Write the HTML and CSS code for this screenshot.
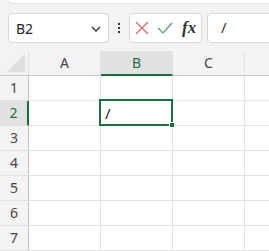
FILE: index.html
```html
<!DOCTYPE html>
<html lang="en">
<head>
  <meta charset="UTF-8" />
  <title>Sheet</title>
  <link rel="stylesheet" href="styles.css">
</head>
<body>

  <div class="ribbon"></div>

  <div class="formula-bar">
    <div class="name-box">
      <span>B2</span>
      <svg class="chevron" width="10" height="6" viewBox="0 0 10 6">
        <path d="M1 1 L5 5 L9 1" fill="none" stroke="#333" stroke-width="1.4"/>
      </svg>
    </div>
    <div class="kebab"><i></i><i></i><i></i></div>
    <div class="fx-group">
      <svg width="14" height="14" viewBox="0 0 14 14">
        <path d="M1 1 L13 13 M13 1 L1 13" stroke="#d9646f" stroke-width="1.2"/>
      </svg>
      <svg width="16" height="12" viewBox="0 0 16 12">
        <path d="M1 6 L6 11 L15 1" fill="none" stroke="#4d9c6b" stroke-width="1.2"/>
      </svg>
      <span class="fx">fx</span>
    </div>
    <div class="formula-input">/</div>
  </div>

  <div class="sheet">
    <div class="corner"><span class="tri"></span></div>
    <div class="col-head">A</div>
    <div class="col-head active">B</div>
    <div class="col-head">C</div>
    <div class="col-head last"></div>

    <div class="row-head">1</div>
    <div class="cell"></div><div class="cell"></div><div class="cell"></div><div class="cell last"></div>

    <div class="row-head active">2</div>
    <div class="cell"></div><div class="cell selected">/</div><div class="cell"></div><div class="cell last"></div>

    <div class="row-head">3</div>
    <div class="cell"></div><div class="cell"></div><div class="cell"></div><div class="cell last"></div>

    <div class="row-head">4</div>
    <div class="cell"></div><div class="cell"></div><div class="cell"></div><div class="cell last"></div>

    <div class="row-head">5</div>
    <div class="cell"></div><div class="cell"></div><div class="cell"></div><div class="cell last"></div>

    <div class="row-head">6</div>
    <div class="cell"></div><div class="cell"></div><div class="cell"></div><div class="cell last"></div>

    <div class="row-head">7</div>
    <div class="cell"></div><div class="cell"></div><div class="cell"></div><div class="cell last"></div>
  </div>

</body>
</html>
```

FILE: styles.css
```css
body {
  margin: 0;
  background: #f3f3f3;
  font-family: "Noto Sans", "Open Sans", sans-serif;
  color: #333;
  overflow: hidden;
}

.ribbon {
  height: 3px;
  margin-left: 8px;
  background: #fff;
  border: 1px solid #e3e3e3;
  border-top: none;
  border-right: none;
  border-bottom-left-radius: 6px;
}

.formula-bar {
  display: flex;
  align-items: center;
  height: 30px;
  margin-top: 9px;
  padding-left: 8px;
}

.name-box {
  box-sizing: border-box;
  width: 101px;
  height: 30px;
  background: #fff;
  border: 1px solid #d6d6d6;
  border-radius: 4px;
  display: flex;
  align-items: center;
  justify-content: space-between;
  padding: 0 7px 0 7px;
  font-size: 14px;
  color: #222;
}

.chevron {
  margin-top: 1px;
}

.kebab {
  display: flex;
  flex-direction: column;
  gap: 2px;
  margin: 0 9px 0 9px;
}

.kebab i {
  display: block;
  width: 2px;
  height: 2px;
  background: #333;
}

.fx-group {
  box-sizing: border-box;
  width: 73px;
  height: 30px;
  background: #fff;
  border: 1px solid #d6d6d6;
  border-radius: 4px;
  display: flex;
  align-items: center;
  gap: 8px;
  padding-left: 5px;
}

.fx {
  font-family: "Liberation Serif", serif;
  font-style: italic;
  font-weight: bold;
  font-size: 17px;
  color: #333;
  margin-left: 1px;
}

.formula-input {
  box-sizing: border-box;
  flex: 1;
  height: 30px;
  margin-left: 5px;
  margin-right: -10px;
  background: #fff;
  border: 1px solid #d6d6d6;
  border-radius: 4px;
  padding-left: 13px;
  font-size: 15px;
  line-height: 27px;
  color: #333;
}

.sheet {
  display: grid;
  grid-template-columns: 29px 72px 72px 72px 1fr;
  grid-auto-rows: 25px;
  margin-top: 8px;
  background: #fff;
}

.sheet > div {
  box-sizing: border-box;
  border-right: 1px solid #e1e1e1;
  border-bottom: 1px solid #e1e1e1;
}

.sheet > .last {
  border-right: none;
}

.corner {
  background: #f3f3f3;
  position: relative;
}

.sheet > .corner,
.sheet > .col-head {
  border-bottom-color: #c8c8c8;
}

.tri {
  position: absolute;
  right: 3px;
  bottom: 3px;
  width: 0;
  height: 0;
  border-left: 18px solid transparent;
  border-bottom: 18px solid #dedede;
}

.col-head {
  background: #f3f3f3;
  text-align: center;
  font-size: 14px;
  line-height: 24px;
  color: #444;
}

.sheet > .col-head.active {
  background: #e1e1e1;
  border-bottom: 2px solid #1e6e42;
  line-height: 23px;
  color: #1e6e42;
}

.sheet > .row-head {
  background: #f3f3f3;
  border-right-color: #c2c2c2;
  text-align: center;
  font-size: 14px;
  line-height: 24px;
  color: #444;
}

.sheet > .row-head.active {
  background: #e1e1e1;
  border-right: 2px solid #1e6e42;
  color: #1e6e42;
}

.selected {
  position: relative;
  font-size: 15px;
  line-height: 24px;
  padding-left: 4px;
  color: #222;
}

.selected::after {
  content: "";
  position: absolute;
  top: -2px;
  left: -2px;
  right: -1px;
  bottom: -1px;
  border: 2px solid #1e6e42;
}

.selected::before {
  content: "";
  position: absolute;
  right: -3px;
  bottom: -3px;
  width: 4px;
  height: 4px;
  background: #1e6e42;
  border: 1px solid #fff;
  z-index: 1;
}
```
